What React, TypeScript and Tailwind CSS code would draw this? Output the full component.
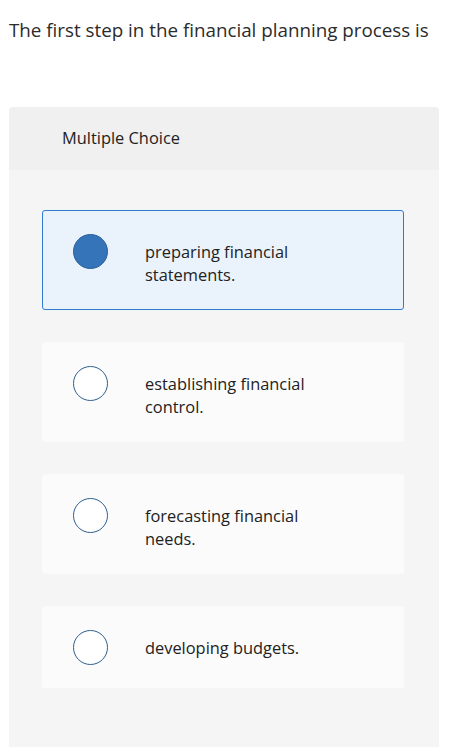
import React from "react";

const opciones = [
  { id: "a", texto: "preparing financial statements." },
  { id: "b", texto: "establishing financial control." },
  { id: "c", texto: "forecasting financial needs." },
  { id: "d", texto: "developing budgets." },
];

export default function App() {
  const seleccion = "a";

  return (
    <div className="min-h-screen bg-white font-['Open_Sans','Liberation_Sans',sans-serif] text-[#2b2b2b] [font-variant-ligatures:none]">
      <p className="px-[9px] pt-[18px] text-[18.8px] leading-[24px]">
        The first step in the financial planning process is
      </p>

      <div className="mx-[9px] mt-[65px] w-[430px] overflow-hidden rounded-t-[4px]">
        <div className="flex h-[63px] items-center bg-[#f0f0f0] pl-[53px] text-[16.4px] text-[#222]">
          Multiple Choice
        </div>

        <div className="flex flex-col gap-[32px] bg-[#f5f5f5] pb-[80px] pl-[33px] pr-[35px] pt-[40px]">
          {opciones.map((o) => {
            const activa = o.id === seleccion;
            return (
              <div
                key={o.id}
                className={`flex items-start rounded-[3px] border pb-[22px] pl-[30px] pt-[23px] ${
                  activa ? "border-[#2f7bd1] bg-[#eaf2fc]" : "border-transparent bg-[#fbfbfb]"
                }`}
              >
                <span
                  className={`h-[35px] w-[35px] shrink-0 rounded-full border ${
                    activa ? "border-[#2b5f99] bg-[#3574b8]" : "border-[#2f5f8f] bg-white"
                  }`}
                />
                <span className="ml-[37px] w-[185px] pb-[1px] pt-[6px] text-[16.4px] leading-[23px] text-[#222]">
                  {o.texto}
                </span>
              </div>
            );
          })}
        </div>
      </div>
    </div>
  );
}
